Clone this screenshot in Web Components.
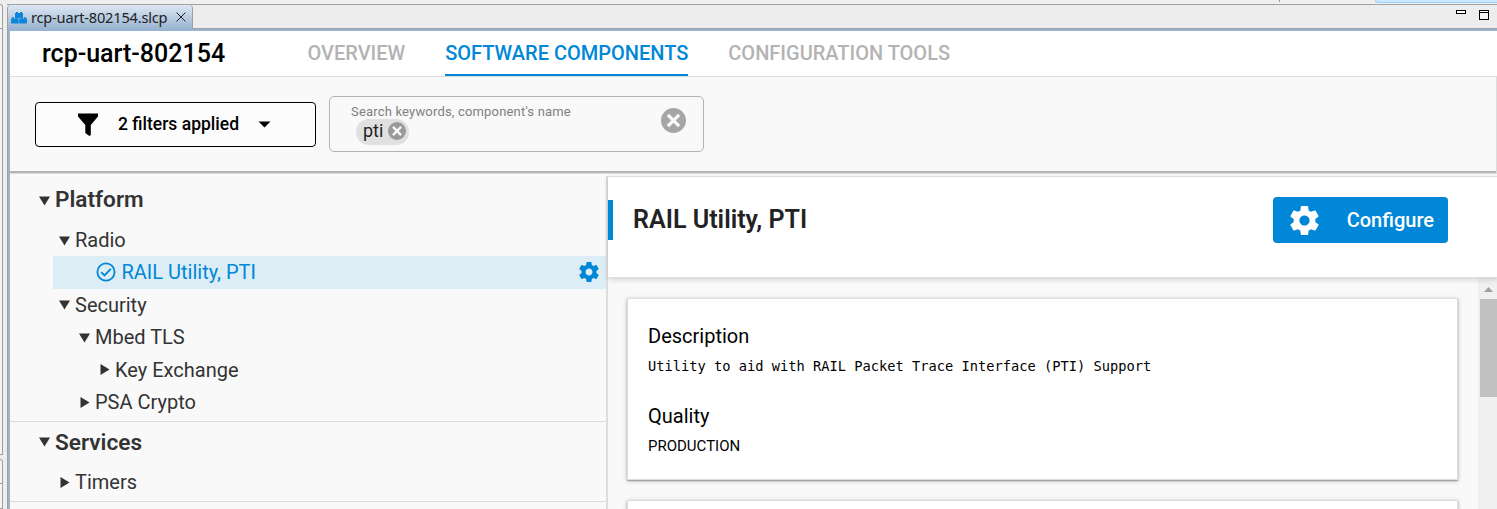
<!DOCTYPE html>
<html lang="en">
<head>
<meta charset="utf-8">
<title>rcp-uart-802154.slcp</title>
<style>
html,body{margin:0;height:100%;overflow:hidden;background:#ededed}
body{font-family:Roboto,sans-serif;color:#000}
</style>
</head>
<body>
<ide-window></ide-window>
<script>
function define(name, html) {
  const t = document.createElement('template');
  t.innerHTML = html;
  customElements.define(name, class extends HTMLElement {
    constructor() {
      super();
      this.attachShadow({mode: 'open'}).appendChild(t.content.cloneNode(true));
    }
  });
}

define('gear-icon', `
<style>:host{display:block;width:24px;height:24px}svg{display:block;width:100%;height:100%}</style>
<svg viewBox="2 2 20 20" fill="currentColor"><path d="M19.43 12.98c.04-.32.07-.64.07-.98s-.03-.66-.07-.98l2.11-1.65c.19-.15.24-.42.12-.64l-2-3.46c-.12-.22-.39-.3-.61-.22l-2.49 1c-.52-.4-1.08-.73-1.69-.98l-.38-2.65C14.46 2.18 14.25 2 14 2h-4c-.25 0-.46.18-.49.42l-.38 2.65c-.61.25-1.17.59-1.69.98l-2.49-1c-.23-.09-.49 0-.61.22l-2 3.46c-.13.22-.07.49.12.64l2.11 1.65c-.04.32-.07.65-.07.98s.03.66.07.98l-2.11 1.65c-.19.15-.24.42-.12.64l2 3.46c.12.22.39.3.61.22l2.49-1c.52.4 1.08.73 1.69.98l.38 2.65c.03.24.24.42.49.42h4c.25 0 .46-.18.49-.42l.38-2.65c.61-.25 1.17-.59 1.69-.98l2.49 1c.23.09.49 0 .61-.22l2-3.46c.12-.22.07-.49-.12-.64l-2.11-1.65zM12 15.5c-1.93 0-3.5-1.57-3.5-3.5s1.57-3.5 3.5-3.5 3.5 1.57 3.5 3.5-1.57 3.5-3.5 3.5z"/></svg>`);

define('clear-icon', `
<style>:host{display:block;color:#a6a6a6}svg{display:block;width:100%;height:100%}</style>
<svg viewBox="0 0 20 20"><circle cx="10" cy="10" r="10" fill="currentColor"/><path d="M5.500 5.500l9 9M14.500 5.500l-9 9" stroke="#fafafa" stroke-width="2.600"/></svg>`);

define('side-views', `
<style>
:host{display:flex;flex-direction:column;width:7px;box-sizing:border-box;padding-top:4px}
div{box-sizing:border-box;width:3px;border:1px solid #a0a0a0;border-left:0;background:#f5f5f5;border-radius:0 4px 0 0}
.a{height:455px}.b{height:50px;margin-top:4px}
i{display:block;height:1px;background:#a0a0a0;margin-top:23px}
</style>
<div class="a"><i></i></div><div class="b"><i></i></div>`);

define('editor-tabs', `
<style>
:host{display:flex;height:25px;box-sizing:border-box;border-top:1px solid #a0a0a0;border-bottom:1px solid #a0a0a0;background:#ededed;margin-left:-1px}
.tab{display:flex;align-items:center;box-sizing:border-box;width:186px;height:24px;padding-left:3px;border:1px solid #a0a0a0;border-width:0 1px 0 1px;border-radius:4px 4px 0 0;background:linear-gradient(#dde7f2,#99b4d1);font:14.6px/20px "Noto Sans","Open Sans",sans-serif;color:#222;flex:none}
.tab span{width:136px;margin-left:4px;letter-spacing:-.2px;white-space:nowrap}
.logo{width:16px;height:13px;flex:none}
.x{width:10px;height:10px;margin-left:8.500px}
.win{margin-left:auto;display:flex;gap:13px;padding:5px 8px 0 0;align-items:flex-start}
.min{box-sizing:border-box;width:10px;height:4px;border:1px solid #000;background:#fff}
.max{box-sizing:border-box;width:10px;height:10px;border:1px solid #000;background:linear-gradient(#fff 1px,#000 1px 2px,#f4f4f4 2px)}
</style>
<div class="tab">
<svg class="logo" viewBox="0 0 16 13"><g fill="#0b86d8"><rect x="4" y="2" width="8" height="5"/><rect x="0" y="7.500" width="7.700" height="5"/><rect x="8.200" y="7.500" width="7.800" height="5"/><path d="M5 1h2v1H5zM9 1h2v1H9zM1 6.200h2v1.500H1zM4 6.200h2v1.500H4zM10 6.200h2v1.500h-2zM13 6.200h2v1.500h-2z"/></g></svg>
<span>rcp-uart-802154.slcp</span>
<svg class="x" viewBox="0 0 10 10"><path d="M.5.5l9 9M9.500.5l-9 9" stroke="#222" stroke-width="1"/></svg>
</div>
<div class="win"><div class="min"></div><div class="max"></div></div>`);

define('project-nav', `
<style>
:host{display:flex;box-sizing:border-box;height:46px;border-bottom:1px solid #ddd;background:#fff;padding-left:32px;white-space:nowrap}
h1{margin:0;width:265.500px;font:500 25px/45px Roboto,sans-serif}
nav{display:flex;gap:40px;font:500 20px/45px Roboto,sans-serif;color:#b3b3b3}
span{height:43px;border-bottom:2px solid transparent}
.on{color:#0087d8;border-color:#0087d8}
</style>
<h1>rcp-uart-802154</h1><nav><span>OVERVIEW</span><span class="on">SOFTWARE COMPONENTS</span><span>CONFIGURATION TOOLS</span></nav>`);

define('filter-bar', `
<style>
:host{display:flex;box-sizing:border-box;height:97px;padding:19px 0 0 25px;gap:13px;border-right:1px solid #ddd;border-bottom:1px solid #ddd;background:#f9f9f9;box-shadow:inset 0 -2px #b4b4b4}
.filters{display:flex;align-items:center;box-sizing:border-box;width:281px;height:45px;margin-top:6px;border:1px solid #000;border-radius:4px;padding-left:42px;font:500 17.500px/43px Roboto,sans-serif;background:#fcfcfc}
.filters span{width:121px;height:43px;margin-left:20px;white-space:nowrap}
.funnel{width:20px;height:23px}.arrow{width:13px;height:7px;margin-left:19px}
.search{display:flex;align-items:center;justify-content:space-between;box-sizing:border-box;width:375px;height:56px;border:1px solid #b4b4b4;border-radius:5px;padding:0 17px 0 21px}
.left{align-self:flex-start;padding-top:7px}
label{display:block;font:13px/16px Roboto,sans-serif;color:#808080;letter-spacing:.18px;white-space:nowrap}
.chip{display:flex;align-items:center;justify-content:space-between;box-sizing:border-box;width:53px;height:26px;margin:-1px 0 0 5px;border-radius:13px;background:#e0e0e0;padding:0 3px 2px 7px;font:18px/24px Roboto,sans-serif;color:#222}
.chip clear-icon{width:18px;height:18px;color:#999}
.search>clear-icon{width:25px;height:25px;margin-top:-7px}
</style>
<div class="filters"><svg class="funnel" viewBox="0 0 20 23"><path d="M0 .5h20v3L12.800 12v10l-1.500 1-4-3v-8L0 3.500z"/></svg><span>2 filters applied</span><svg class="arrow" viewBox="0 0 13 7"><path d="M.5.5h12l-6 6z"/></svg></div>
<div class="search"><div class="left"><label>Search keywords, component's name</label><div class="chip">pti<clear-icon></clear-icon></div></div><clear-icon></clear-icon></div>`);

define('tree-group', `
<style>
:host{display:block;box-sizing:border-box;border-bottom:1px solid #ddd;padding-bottom:2.600px}
header{display:flex;align-items:center;height:44px;box-sizing:border-box;padding:0 0 3px 29px;font:600 22.600px/41px Roboto,sans-serif;color:#333}
:host(:first-of-type) header{padding-bottom:5px}
svg{width:11px;height:10px;margin-right:5px;position:relative;top:1px}
:host(:last-of-type) svg{top:0}
</style>
<header><svg viewBox="0 0 11 10"><path d="M0 .5h11l-5.500 9z" fill="#333"/></svg><slot name="title"></slot></header><slot></slot>`);

define('tree-row', `
<style>
:host{display:flex;align-items:center;box-sizing:border-box;height:32.400px;margin-left:43px;padding-left:calc(6px + 20px*var(--level,0));font:20px/32px Roboto,sans-serif;color:#333;white-space:nowrap}
.mark{width:11px;height:11px;margin-right:5px;flex:none}
.check,gear-icon{display:none}
:host([closed]) .mark{transform:rotate(-90deg)}
:host([selected]){background:#dcedf6;color:#0087d8;padding:0 7px 1px 43px}
:host([selected]) .mark{display:none}
:host([selected]) .check{display:block;width:20px;height:20px;margin-right:5.500px}
:host([selected]) gear-icon{display:block;width:20px;height:20px;margin-left:auto}
</style>
<svg class="mark" viewBox="0 0 11 11"><path d="M0 1.500h11l-5.500 9z" fill="#333"/></svg>
<svg class="check" viewBox="0 0 20 20" fill="none" stroke="currentColor" stroke-width="1.800"><circle cx="10" cy="10" r="8.600"/><path d="M5.200 10.200l3.300 3.200 6.300-6.600"/></svg>
<slot></slot><gear-icon></gear-icon>`);

define('component-tree', `
<style>
:host{display:block;box-sizing:border-box;width:598px;flex:none;background:linear-gradient(#ddd,#ddd) 100% 2px/2px 100% no-repeat #f9f9f9;padding:6px 2px 0 0}
</style>
<tree-group><span slot="title">Platform</span>
<tree-row>Radio</tree-row>
<tree-row selected>RAIL Utility, PTI</tree-row>
<tree-row>Security</tree-row>
<tree-row style="--level:1">Mbed TLS</tree-row>
<tree-row style="--level:2" closed>Key Exchange</tree-row>
<tree-row style="--level:1" closed>PSA Crypto</tree-row>
</tree-group>
<tree-group><span slot="title">Services</span><tree-row closed>Timers</tree-row></tree-group>`);

define('info-card', `
<style>
:host{display:block;box-sizing:border-box;height:182px;border:1px solid #ddd;background:#fff;padding:21px 20px;box-shadow:0 1px 4px rgba(0,0,0,.28),0 1px 1px rgba(0,0,0,.22)}
</style><slot></slot>`);

define('scroll-bar', `
<style>
:host{display:block;width:19px;flex:none;background:#f0f0f0}
svg{display:block;width:9px;height:5px;margin:9px 0 7px 6px}
div{height:98px;margin-left:2px;background:#c1c1c1}
</style><svg viewBox="0 0 9 5"><path d="M4.500 0L9 5H0z" fill="#a0a0a0"/></svg><div></div>`);

define('component-detail', `
<style>
:host{display:flex;flex-direction:column;flex:1;min-width:0;padding-top:2px;background:#f9f9f9}
header{display:flex;align-items:flex-start;box-sizing:border-box;height:102px;flex:none;border:1px solid #ddd;border-width:1px 0;background:#fff;box-shadow:0 2px 5px rgba(0,0,0,.14);z-index:1;padding-right:49px}
.bar{width:5px;height:40px;margin:23px 20px 0 0;background:#0087d8}
h2{margin:23px 0 0;font:600 25.100px/40px Roboto,sans-serif;color:#222;white-space:nowrap}
.btn{display:flex;align-items:center;box-sizing:border-box;width:175px;height:46px;margin:20px 0 0 auto;border-radius:4px;background:#0087d8;color:#fff;padding:0 14px 0 17px;justify-content:space-between;font:500 20px/46px Roboto,sans-serif}
.btn gear-icon{width:29px;height:29px}
.body{display:flex;flex:1;min-height:0}
.cards{flex:1;padding:20px 20px 0 19px;display:flex;flex-direction:column;gap:20px}
info-card{flex:none}
h3{margin:0;font:400 20px/32px Roboto,sans-serif}
code{display:block;font:13.710px/20px "DejaVu Sans Mono",monospace;margin:4px 0 24px;white-space:nowrap}
p{margin:4px 0;font:15px/20px Roboto,sans-serif}
</style>
<header><div class="bar"></div><h2>RAIL Utility, PTI</h2><div class="btn"><gear-icon></gear-icon><span>Configure</span></div></header>
<div class="body"><div class="cards"><info-card><h3>Description</h3><code>Utility to aid with RAIL Packet Trace Interface (PTI) Support</code><h3>Quality</h3><p>PRODUCTION</p></info-card><info-card></info-card></div><scroll-bar></scroll-bar></div>`);

define('ide-window', `
<style>
:host{display:flex;height:509px;width:1497px;overflow:hidden}
.main{flex:1;min-width:0;display:flex;flex-direction:column}
.strip{height:4px;display:flex;justify-content:flex-end;align-items:flex-start;background:#f0f0f0}
.sep{width:1px;height:2px;background:#999;margin-right:95px}
.sel{box-sizing:border-box;width:122px;height:3px;border:1px solid #99d1ff;border-width:0 0 1px 1px;border-radius:0 0 0 3px;background:#cce8ff}
.editor{display:flex;flex-direction:column;flex:1;min-height:0;border:solid #99b4d1;border-width:2px 0 0 2px}
.edge{width:1px;background:#a0a0a0;margin-top:8px}
.split{display:flex;flex:1;min-height:0}
</style>
<side-views></side-views><div class="edge"></div>
<div class="main"><div class="strip"><div class="sep"></div><div class="sel"></div></div>
<editor-tabs></editor-tabs>
<div class="editor"><project-nav></project-nav><filter-bar></filter-bar><div class="split"><component-tree></component-tree><component-detail></component-detail></div></div></div>`);
</script>
</body>
</html>
